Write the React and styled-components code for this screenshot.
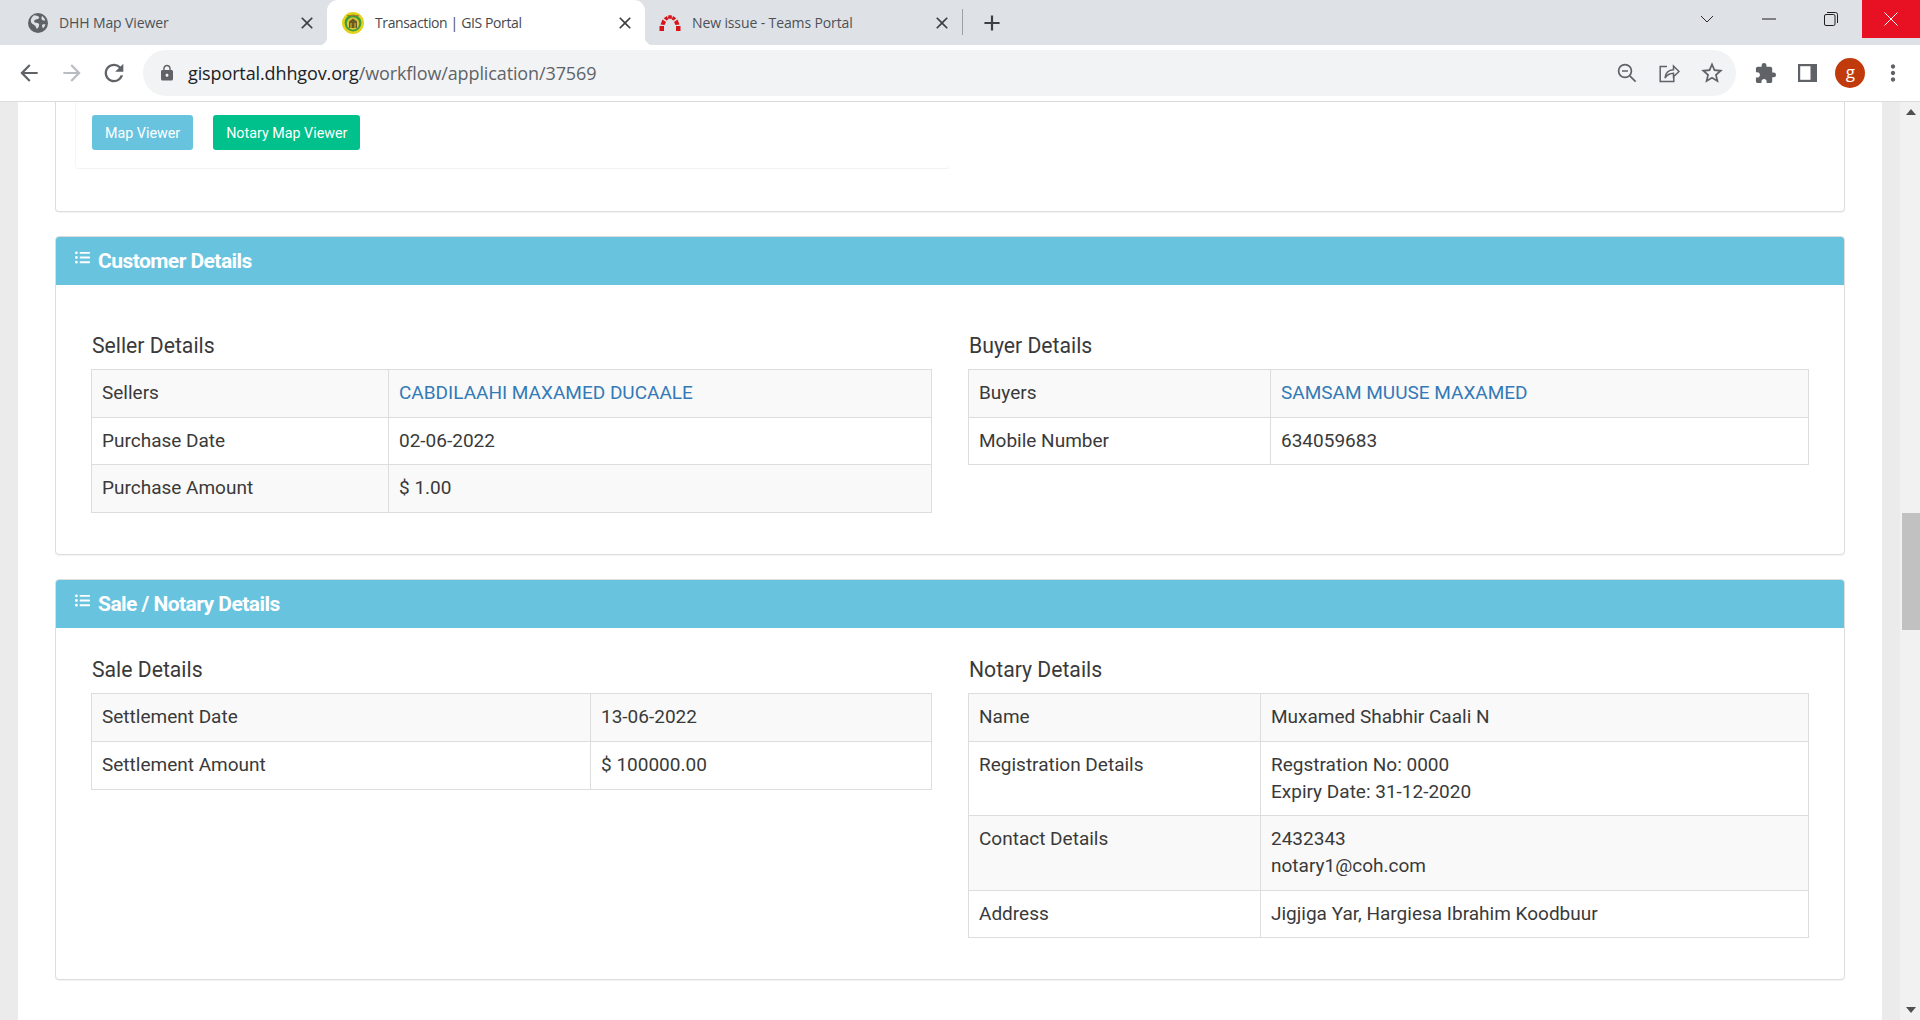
import React from "react";
import styled, { createGlobalStyle } from "styled-components";
import { FaListUl } from "react-icons/fa";
import {
  MdArrowBack,
  MdArrowForward,
  MdRefresh,
  MdLock,
  MdExtension,
  MdStarBorder,
  MdClose,
  MdAdd,
  MdMoreVert,
} from "react-icons/md";

const GlobalStyle = createGlobalStyle`
  html, body {
    margin: 0;
    padding: 0;
    height: 100%;
    overflow: hidden;
    background: #fff;
  }
  * {
    box-sizing: border-box;
  }
`;

const Screen = styled.div`
  width: 1920px;
  height: 1020px;
  display: flex;
  flex-direction: column;
  overflow: hidden;
  font-family: Roboto, "Liberation Sans", sans-serif;
`;

/* browser chrome */
const TabStrip = styled.div`
  height: 45px;
  flex: none;
  display: flex;
  background: #dee1e6;
  font-family: "Open Sans", "Noto Sans", sans-serif;
`;

const Tab = styled.div`
  position: relative;
  width: ${(p) => p.$width}px;
  height: 45px;
  display: flex;
  align-items: center;
  padding-left: ${(p) => p.$pad}px;
  color: ${(p) => (p.$active ? "#45494d" : "#4d5156")};
  background: ${(p) => (p.$active ? "#fff" : "transparent")};
  border-radius: 11px 11px 0 0;

  ${(p) =>
    p.$active &&
    `
    &::before, &::after {
      content: "";
      position: absolute;
      bottom: 0;
      width: 8px;
      height: 8px;
    }
    &::before {
      left: -8px;
      background: radial-gradient(circle at 0 0, transparent 8px, #fff 8.5px);
    }
    &::after {
      right: -8px;
      background: radial-gradient(circle at 100% 0, transparent 8px, #fff 8.5px);
    }
  `}
`;

const TabTitle = styled.span`
  margin-left: 11px;
  font-size: 14px;
  white-space: nowrap;
  flex: 1;
  letter-spacing: ${(p) => (p.$active ? "-0.38px" : "-0.12px")};
`;

const TabClose = styled.span`
  display: flex;
  margin-right: 10px;
  color: #3c4043;
  font-size: 20px;
`;

const TabDivider = styled.div`
  width: 1px;
  height: 26px;
  margin: 9px 0 0 0;
  background: #9aa0a6;
`;

const NewTab = styled.div`
  width: 58px;
  height: 45px;
  display: flex;
  align-items: center;
  justify-content: center;
  color: #3c4043;
  font-size: 26px;
`;

const StripSpacer = styled.div`
  flex: 1;
`;

const WindowButton = styled.div`
  width: ${(p) => p.$width || 62}px;
  height: 38px;
  display: flex;
  align-items: center;
  justify-content: center;
  color: ${(p) => (p.$danger ? "#fff" : "#1f1f1f")};
  background: ${(p) => (p.$danger ? "#e81123" : "transparent")};
`;

const Toolbar = styled.div`
  height: 57px;
  flex: none;
  display: flex;
  align-items: flex-start;
  padding: 5px 6px 0 8px;
  background: #fff;
  border-bottom: 1px solid #dadce0;
`;

const NavButton = styled.div`
  width: 42.5px;
  height: 46px;
  display: flex;
  align-items: center;
  justify-content: center;
  flex: none;
  color: ${(p) => (p.$disabled ? "#b9bcc0" : "#5f6368")};
  font-size: ${(p) => p.$size || 26}px;
`;

const AddressBar = styled.div`
  width: 1593px;
  height: 46px;
  margin: 0 8px 0 7.5px;
  flex: none;
  display: flex;
  align-items: center;
  padding: 0 3px 0 15px;
  background: #f1f3f4;
  border-radius: 23px;
`;

const LockIcon = styled.span`
  display: flex;
  color: #5f6368;
  font-size: 18px;
`;

const Url = styled.div`
  margin-left: 12px;
  flex: 1;
  font-family: "Open Sans", "Noto Sans", sans-serif;
  font-size: 18px;
  letter-spacing: -0.12px;
  color: #5f6368;
`;

const UrlHost = styled.span`
  color: #202124;
`;

const Avatar = styled.div`
  width: 30px;
  height: 30px;
  flex: none;
  border-radius: 50%;
  background: #c13a0b;
  color: #fff;
  display: flex;
  align-items: center;
  justify-content: center;
  font-size: 17px;
  padding-bottom: 4px;
  font-family: "Open Sans", sans-serif;
`;

/* page below the chrome */
const Viewport = styled.div`
  flex: 1;
  min-height: 0;
  display: flex;
  background: #fff;
`;

const Gutter = styled.div`
  width: ${(p) => p.$width}px;
  flex: none;
  background: #ebebeb;
`;

const Page = styled.main`
  flex: 1;
  min-width: 0;
  padding: 0 37px;
  background: #fff;
  color: #3a3a3a;
`;

const ScrollTrack = styled.div`
  width: 20px;
  flex: none;
  display: flex;
  flex-direction: column;
  background: #f1f1f1;
`;

const ScrollArrow = styled.div`
  height: 20px;
  flex: none;
  display: flex;
  align-items: center;
  justify-content: center;
  margin-top: ${(p) => (p.$down ? "auto" : 0)};
  padding-left: 2px;

  &::after {
    content: "";
    width: 0;
    height: 0;
    border-left: 5px solid transparent;
    border-right: 5px solid transparent;
    ${(p) =>
      p.$down ? "border-top: 6px solid #505050;" : "border-bottom: 6px solid #505050;"}
  }
`;

const ScrollThumb = styled.div`
  height: 117px;
  margin: 391px 0 0 2px;
  background: #c1c1c1;
`;

const Card = styled.section`
  background: #fff;
  border: 1px solid #ddd;
  border-radius: 4px;
  box-shadow: 0 1px 1px rgba(0, 0, 0, 0.05);
  margin-bottom: 24px;
`;

const TopCard = styled(Card)`
  height: 110px;
  padding-left: 19px;
  border-top: none;
  border-radius: 0 0 4px 4px;
`;

const ActionBox = styled.div`
  width: 875px;
  height: 67px;
  padding: 13px 0 0 16px;
  display: flex;
  gap: 20px;
  align-items: flex-start;
  border-bottom: 1px solid #f2f2f2;
  border-left: 1px solid #f7f7f7;
  border-radius: 0 0 4px 4px;
`;

const Button = styled.a`
  height: 35px;
  padding: 0 13px;
  display: flex;
  align-items: center;
  border-radius: 3px;
  color: #fff;
  font-size: 14.3px;
  font-weight: 400;
  background: ${(p) => (p.$variant === "green" ? "#00c08b" : "#68c3df")};
`;

const PanelHeader = styled.header`
  height: 48px;
  padding-left: 19px;
  display: flex;
  align-items: center;
  background: #68c3df;
  color: #fff;
  border-radius: 3px 3px 0 0;
`;

const PanelIcon = styled.span`
  display: flex;
  font-size: 15px;
  margin: -7px 8px 0 0;
`;

const PanelTitle = styled.h3`
  margin: 0;
  font-size: 21px;
  font-weight: 700;
  letter-spacing: -0.55px;
`;

const PanelBody = styled.div`
  padding: ${(p) => p.$top}px 35px ${(p) => p.$bottom}px;
  display: grid;
  grid-template-columns: 841px 841px;
  gap: 36px;
`;

const SectionTitle = styled.h4`
  margin: 0 0 11px 1px;
  font-size: 21.2px;
  line-height: 24px;
  font-weight: 400;
`;

const Table = styled.table`
  width: 100%;
  table-layout: fixed;
  border-collapse: collapse;
  font-size: 19px;
  line-height: 26.7px;

  td {
    padding: 10px;
    border: 1px solid #ddd;
    vertical-align: top;
  }

  tr:nth-child(odd) td {
    background: #f9f9f9;
  }
`;

const CellLink = styled.a`
  color: #337ab7;
`;

const GlobeIcon = () => (
  <svg width="20" height="20" viewBox="0 0 20 20" fill="none">
    <circle cx="10" cy="10" r="10" fill="#5f6368" />
    <path
      d="M6 2.2c2 .3 4 .6 5 1.8 .8 1 -.8 2 -2.200 2.300 -1.500.3 -2.800.7 -2.600 2.200 .2 1.300 2 1.300 3.300 1.500 1.600.3 2 1.500 1.500 2.800 -.4 1.200 -.8 2.500 -2 3 -1 -.7 -1.200 -2 -1.800 -3 -.7 -1 -2.600 -1.500 -3.500 -2.600 -1 -1.200 -1.200 -3 -.4 -4.700 .6 -1.300 1.500 -2.300 2.700 -3.300z"
      fill="#dee1e6"
    />
    <path
      d="M14 3c1.500 1 2.800 2.600 3.300 4.300 -1.200.6 -2.800.3 -3.500 -.7 -.5 -.8 -.3 -2.300 .2 -3.600zM14.500 11.500c.9 -.5 2 -.4 2.900 -.2 -.3 1.600 -1.200 3 -2.400 4 -.8 -1 -1.300 -2.900 -.5 -3.800z"
      fill="#dee1e6"
    />
  </svg>
);

const SealIcon = () => (
  <svg width="22" height="22" viewBox="0 0 22 22">
    <circle cx="11" cy="11" r="11" fill="#e2d21c" />
    <circle cx="11" cy="11" r="8.400" fill="#3f9a3c" />
    <circle cx="11" cy="11.500" r="6.200" fill="#d8c83a" />
    <path d="M7 16V9.500L11 6.500l4 3V16h-1.500v-5h-1v5h-3v-5h-1v5z" fill="#6b5a22" />
    <path d="M5 3.600h12" stroke="#b7791f" strokeWidth="1" />
  </svg>
);

const ArchIcon = () => (
  <svg width="22" height="16" viewBox="0 0 22 16" fill="#d7141a">
    <path d="M0.500 11h4.500v5H0.500zM17 11h4.500v5H17z" />
    <path d="M1.500 9.500l2-5 3.500 2.500-1.500 3zM16.500 10l-1.500-3 3.500-2.500 2 5z" />
    <path d="M4.700 3.300L8 .9l1.300 3.500-1.800 1zM17.300 3.300L14 .9l-1.300 3.500 1.800 1z" />
    <path d="M9.300.3h3.400l.3 3.500h-4z" />
  </svg>
);

const ZoomOutIcon = () => (
  <svg width="20" height="20" viewBox="0 0 20 20" fill="none" stroke="#5f6368" strokeWidth="1.700">
    <circle cx="8" cy="8" r="6.400" />
    <path d="M12.800 12.800l5.800 5.800M5 8h6" />
  </svg>
);

const ShareIcon = () => (
  <svg width="21" height="20" viewBox="0 0 21 20" fill="none" stroke="#5f6368" strokeWidth="1.500">
    <path d="M8 3.500H1.200v15h13.600V14" />
    <path d="M6 15c.5-5 3.500-8 8.500-8.200V3l5.500 5.500-5.500 5.300v-3.600C11 10.300 8 11.800 6 15z" />
  </svg>
);

const SidePanelIcon = () => (
  <svg width="19" height="18" viewBox="0 0 19 18">
    <path d="M0 0h19v18H0z" fill="#5f6368" />
    <path d="M2.200 2.200h10.300v13.600H2.200z" fill="#fff" />
  </svg>
);

const ChevronIcon = () => (
  <svg width="14" height="8" viewBox="0 0 14 8" fill="none" stroke="#2b2b2b" strokeWidth="1">
    <path d="M1 1l6 6 6-6" />
  </svg>
);

const MinimizeIcon = () => (
  <svg width="14" height="2" viewBox="0 0 14 2">
    <path d="M0 1h14" stroke="#1f1f1f" strokeWidth="1" />
  </svg>
);

const RestoreIcon = () => (
  <svg width="14" height="14" viewBox="0 0 14 14" fill="none" stroke="#1f1f1f" strokeWidth="1">
    <rect x="0.500" y="2.500" width="10.500" height="11" rx="1.500" />
    <path d="M3 .5h8.500a2 2 0 0 1 2 2V11" />
  </svg>
);

const CloseIcon = () => (
  <svg width="14" height="14" viewBox="0 0 14 14" fill="none" stroke="#fff" strokeWidth="1">
    <path d="M.5.5l13 13M13.500.5l-13 13" />
  </svg>
);

const tabs = [
  { title: "DHH Map Viewer", width: 327, pad: 28, icon: <GlobeIcon /> },
  { title: "Transaction | GIS Portal", width: 318, pad: 15, icon: <SealIcon />, active: true },
  { title: "New issue - Teams Portal", width: 317, pad: 14, icon: <ArchIcon /> },
];

const DetailTable = ({ labelWidth, rows }) => (
  <Table>
    <colgroup>
      <col style={{ width: labelWidth }} />
      <col />
    </colgroup>
    <tbody>
      {rows.map(([label, value, isLink]) => (
        <tr key={label}>
          <td>{label}</td>
          <td>
            {isLink ? (
              <CellLink>{value}</CellLink>
            ) : (
              value.split("\n").map((line) => <div key={line}>{line}</div>)
            )}
          </td>
        </tr>
      ))}
    </tbody>
  </Table>
);

const Panel = ({ title, top, bottom, sections }) => (
  <Card>
    <PanelHeader>
      <PanelIcon>
        <FaListUl />
      </PanelIcon>
      <PanelTitle>{title}</PanelTitle>
    </PanelHeader>
    <PanelBody $top={top} $bottom={bottom}>
      {sections.map((s) => (
        <div key={s.title}>
          <SectionTitle>{s.title}</SectionTitle>
          <DetailTable labelWidth={s.labelWidth} rows={s.rows} />
        </div>
      ))}
    </PanelBody>
  </Card>
);

const customerSections = [
  {
    title: "Seller Details",
    labelWidth: 297,
    rows: [
      ["Sellers", "CABDILAAHI MAXAMED DUCAALE", true],
      ["Purchase Date", "02-06-2022"],
      ["Purchase Amount", "$ 1.00"],
    ],
  },
  {
    title: "Buyer Details",
    labelWidth: 302,
    rows: [
      ["Buyers", "SAMSAM MUUSE MAXAMED", true],
      ["Mobile Number", "634059683"],
    ],
  },
];

const saleSections = [
  {
    title: "Sale Details",
    labelWidth: 499,
    rows: [
      ["Settlement Date", "13-06-2022"],
      ["Settlement Amount", "$ 100000.00"],
    ],
  },
  {
    title: "Notary Details",
    labelWidth: 292,
    rows: [
      ["Name", "Muxamed Shabhir Caali N"],
      ["Registration Details", "Regstration No: 0000\nExpiry Date: 31-12-2020"],
      ["Contact Details", "2432343\nnotary1@coh.com"],
      ["Address", "Jigjiga Yar, Hargiesa Ibrahim Koodbuur"],
    ],
  },
];

export default function App() {
  return (
    <Screen>
      <GlobalStyle />
      <TabStrip>
        {tabs.map((t) => (
          <Tab key={t.title} $width={t.width} $pad={t.pad} $active={t.active}>
            {t.icon}
            <TabTitle $active={t.active}>{t.title}</TabTitle>
            <TabClose>
              <MdClose />
            </TabClose>
          </Tab>
        ))}
        <TabDivider />
        <NewTab>
          <MdAdd />
        </NewTab>
        <StripSpacer />
        <WindowButton>
          <ChevronIcon />
        </WindowButton>
        <WindowButton>
          <MinimizeIcon />
        </WindowButton>
        <WindowButton>
          <RestoreIcon />
        </WindowButton>
        <WindowButton $danger $width={58}>
          <CloseIcon />
        </WindowButton>
      </TabStrip>

      <Toolbar>
        <NavButton>
          <MdArrowBack />
        </NavButton>
        <NavButton $disabled>
          <MdArrowForward />
        </NavButton>
        <NavButton $size={28}>
          <MdRefresh />
        </NavButton>
        <AddressBar>
          <LockIcon>
            <MdLock />
          </LockIcon>
          <Url>
            <UrlHost>gisportal.dhhgov.org</UrlHost>/workflow/application/37569
          </Url>
          <NavButton>
            <ZoomOutIcon />
          </NavButton>
          <NavButton>
            <ShareIcon />
          </NavButton>
          <NavButton>
            <MdStarBorder />
          </NavButton>
        </AddressBar>
        <NavButton $size={23}>
          <MdExtension />
        </NavButton>
        <NavButton>
          <SidePanelIcon />
        </NavButton>
        <NavButton>
          <Avatar>g</Avatar>
        </NavButton>
        <NavButton>
          <MdMoreVert />
        </NavButton>
      </Toolbar>

      <Viewport>
        <Gutter $width={18} />
        <Page>
          <TopCard>
            <ActionBox>
              <Button>Map Viewer</Button>
              <Button $variant="green">Notary Map Viewer</Button>
            </ActionBox>
          </TopCard>
          <Panel title="Customer Details" top={49} bottom={41} sections={customerSections} />
          <Panel title="Sale / Notary Details" top={30} bottom={41} sections={saleSections} />
        </Page>
        <Gutter $width={18} />
        <ScrollTrack>
          <ScrollArrow />
          <ScrollThumb />
          <ScrollArrow $down />
        </ScrollTrack>
      </Viewport>
    </Screen>
  );
}
